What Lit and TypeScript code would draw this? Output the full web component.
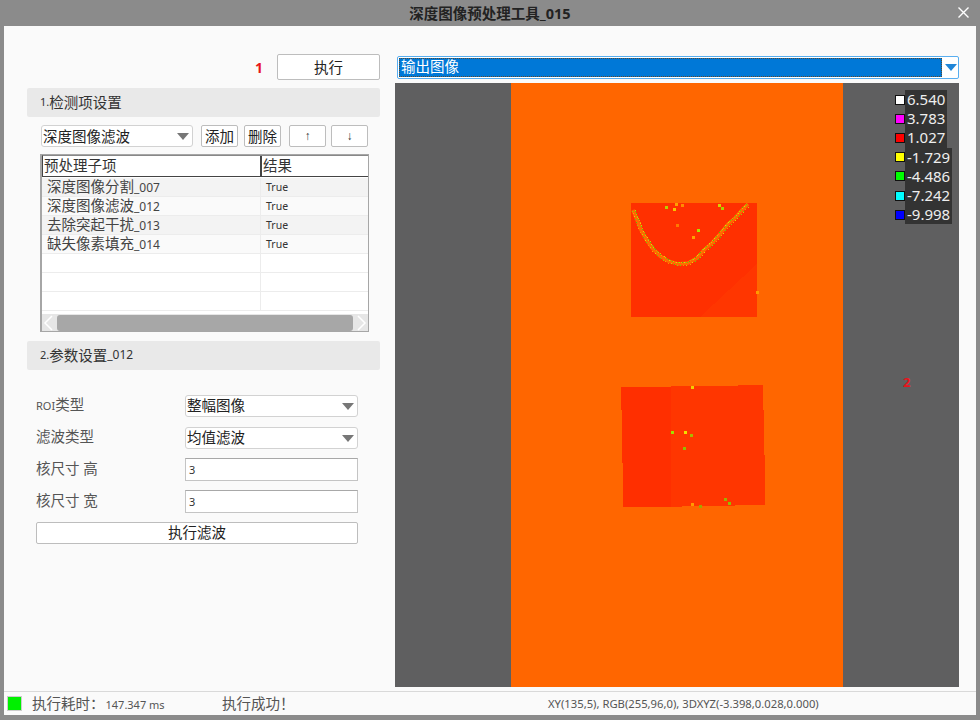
import { LitElement, html, css, svg } from "lit";
import { customElement } from "lit/decorators.js";

const rows = [
  ["深度图像分割", "_007"],
  ["深度图像滤波", "_012"],
  ["去除突起干扰", "_013"],
  ["缺失像素填充", "_014"],
];
const legend: [string, string][] = [
  ["#ffffff", "6.540"],
  ["#ff00ff", "3.783"],
  ["#ff0000", "1.027"],
  ["#ffff00", "-1.729"],
  ["#00ff00", "-4.486"],
  ["#00ffff", "-7.242"],
  ["#0000ff", "-9.998"],
];
const specks: [number, number, string][] = [
  [665, 206, "#b8d000"], [673, 208, "#f5c400"], [675, 203, "#ffa000"], [681, 204, "#ff8c00"], [718, 204, "#d8d000"], [721, 207, "#a8d000"],
  [697, 229, "#b0e000"], [692, 236, "#ffa000"], [676, 224, "#ff7a00"], [756, 291, "#ff9a00"],
  [691, 386, "#f0d000"], [671, 431, "#a0e000"], [684, 431, "#f0e000"], [690, 434, "#a8b800"], [683, 447, "#90c000"],
  [724, 498, "#a0b000"], [728, 502, "#90c000"], [691, 503, "#ff9a00"], [699, 505, "#a0a800"],
];
const curve: [number, number][] = [
  [633, 210], [637, 220], [641, 230], [646, 239], [652, 248], [660, 256], [668, 261], [678, 264], [688, 263],
  [697, 258], [705, 249], [712, 243], [720, 234], [728, 224], [735, 218], [742, 210], [748, 204],
];
const curvePath = "M" + curve.map(([x, y]) => `${x} ${y}`).join("L");
const palette = ["#9ccf00", "#ffa000", "#e8d800", "#6fd000", "#ff8a00", "#c8d400", "#58c800"];
const curveSpecks: [number, number, string][] = [];
curve.slice(1).forEach(([x, y], i) => {
  const [px, py] = curve[i];
  const len = Math.hypot(x - px, y - py);
  const nx = -(y - py) / len;
  const ny = (x - px) / len;
  const n = Math.round(len);
  for (let k = 0; k < n; k++) {
    const t = k / n;
    const side = (i + k) % 3 === 0 ? 1.6 : -1.6;
    const cx = Math.round(px + (x - px) * t + nx * side);
    const cy = Math.round(py + (y - py) * t + ny * side);
    curveSpecks.push([cx, cy, palette[(i * 3 + k * 5) % palette.length]]);
  }
});

const chevron = (d: string) => html`<svg class="chev" viewBox="0 0 14 16"><path d=${d}></path></svg>`;
const arrow = html`<svg class="arrow" viewBox="0 0 12 8"><path d="M0 0H12L6 7Z"></path></svg>`;

@customElement("app-root")
export class AppRoot extends LitElement {
  static styles = css`
    :host {
      display: flex;
      flex-direction: column;
      width: 980px;
      height: 720px;
      box-sizing: border-box;
      background: #8b8b8b;
      padding-bottom: 5px;
      overflow: hidden;
      font-family: "Noto Sans", "Noto Sans CJK SC", sans-serif;
      color: #333;
    }
    * { box-sizing: border-box; }
    .title {
      height: 26px;
      flex: none;
      display: flex;
      align-items: center;
      justify-content: center;
      font-size: 14.5px;
      font-weight: 700;
      color: #222;
      position: relative;
      padding-bottom: 2px;
    }
    .close { position: absolute; right: 11px; top: 7px; width: 11px; height: 11px; }
    .close path { stroke: #fff; stroke-width: 1.4; fill: none; }
    .win {
      flex: 1;
      margin: 0 4px;
      background: #fafafa;
      display: flex;
      flex-direction: column;
      min-height: 0;
    }
    .main { flex: 1; display: flex; min-height: 0; }
    .left { width: 391px; flex: none; padding: 28px 15px 0 23px; display: flex; flex-direction: column; }
    .top { display: flex; justify-content: flex-end; align-items: center; height: 26px; gap: 14px; }
    .one { color: #e8141c; font-weight: 700; font-size: 14px; }
    button {
      font: inherit;
      background: #fff;
      border: 1px solid #bdbdbd;
      border-radius: 2px;
      color: #222;
      padding: 0 0 2px;
      display: flex;
      align-items: center;
      justify-content: center;
    }
    .run { width: 103px; height: 26px; font-size: 14.5px; }
    .sec {
      height: 29px;
      background: #e9e9e9;
      border-radius: 2px;
      font-size: 14.5px;
      display: flex;
      align-items: center;
      padding: 0 0 2px 13px;
      color: #333;
      flex: none;
    }
    .sec .n { font-size: 11px; }
    .sec .id { font-size: 12px; }
    .sec.a { margin-top: 8px; }
    .sec.b { margin-top: 9px; }
    .tools { display: flex; margin: 8px 0 0 14px; height: 22px; }
    .tools button { width: 37px; height: 22px; font-size: 14.5px; }
    .tools .sm { font-size: 12px; font-family: "Liberation Sans", sans-serif; padding: 0; color: #333; }
    .sel {
      background: #fff;
      border: 1px solid #d2d2d2;
      border-radius: 3px;
      display: flex;
      align-items: center;
      font-size: 14.5px;
      color: #222;
      padding: 0 0 2px 1px;
      position: relative;
    }
    .sel .arrow { position: absolute; right: 3px; top: 7px; width: 12px; height: 8px; fill: #777; }
    .sel.s1 { width: 152px; height: 22px; margin-right: 8px; }
    .g6 { margin-right: 6px; }
    .g8 { margin-right: 8px; }
    .g5 { margin-right: 5px; }
    .table {
      margin: 7px 0 0 13px;
      width: 329px;
      height: 178px;
      border: 1px solid #a6a6a6;
      border-left-width: 2px;
      background: #fff;
      display: flex;
      flex-direction: column;
      flex: none;
    }
    .hd {
      display: grid;
      grid-template-columns: 217px 1fr;
      height: 22px;
      border: 1px solid #444;
      border-right: 0;
      border-top-color: #888;
      font-size: 14.5px;
      color: #333;
      flex: none;
    }
    .hd div { padding-left: 1px; line-height: 18px; }
    .hd div + div { border-left: 2px solid #444; padding-left: 1px; }
    .rows { flex: 1; padding-top: 1px; overflow: hidden; }
    .row {
      display: grid;
      grid-template-columns: 219px 1fr;
      height: 19px;
      border-bottom: 1px solid #ececec;
      font-size: 14.5px;
      line-height: 17px;
      color: #444;
    }
    .row.on { background: #fafafa; }
    .row.on:nth-child(odd) { background: #f3f3f3; }
    .row div:first-child { padding-left: 5px; border-right: 1px solid #ececec; white-space: nowrap; }
    .row div:last-child { padding-left: 5px; font-size: 10.5px; line-height: 19px; color: #333; }
    .row small { font-size: 12px; }
    .bar {
      height: 17px;
      flex: none;
      background: #e6e6e6;
      display: flex;
      align-items: center;
      margin-top: auto;
    }
    .chev { width: 14px; height: 16px; flex: none; }
    .chev path { stroke: #fff; stroke-width: 1.5; fill: none; }
    .thumb { flex: 1; height: 16px; background: #a7a7a7; border-radius: 3px; margin: 0 1px; }
    .form {
      padding: 25px 22px 0 9px;
      display: grid;
      grid-template-columns: 149px 173px;
      grid-template-rows: 22px 23px 23px 23px 22px;
      row-gap: 9px;
      align-items: center;
    }
    .lab { font-size: 14.5px; color: #555; padding-bottom: 5px; }
    .lab small { font-size: 11px; }
    .form .sel { height: 22px; width: 173px; align-self: end; padding-bottom: 3px; }
    .inp {
      height: 23px;
      background: #fff;
      border: 1px solid #c4c4c4;
      border-top-color: #a8a8a8;
      font-size: 11px;
      color: #333;
      display: flex;
      align-items: center;
      padding-left: 3px;
    }
    .form button { grid-column: 1 / 3; height: 22px; font-size: 14.5px; padding-bottom: 4px; }
    .right { flex: 1; padding: 30px 17px 0 0; display: flex; flex-direction: column; min-width: 0; }
    .output {
      height: 23px;
      margin-left: 2px;
      border: 1px solid #58aef0;
      border-radius: 2px;
      background: #fff;
      padding: 1px;
      display: flex;
      flex: none;
    }
    .output .val {
      flex: 1;
      background: #0078d7;
      outline: 1px dotted #5a4a30;
      outline-offset: -1px;
      color: #fff;
      font-size: 14.5px;
      line-height: 17px;
      padding-left: 2px;
    }
    .output .ar { width: 15px; display: flex; align-items: center; justify-content: center; padding-left: 2px; }
    .output .arrow { width: 12px; height: 8px; fill: #1f86d8; }
    .canvas { position: relative; height: 604px; margin-top: 4px; background: #5f5f60; flex: none; }
    .canvas svg { position: absolute; inset: 0; width: 100%; height: 100%; display: block; }
    .two { position: absolute; left: 508px; top: 290px; color: #e8141c; font-size: 13px; font-weight: 700; }
    .legend { position: absolute; left: 500px; top: 7px; display: flex; flex-direction: column; }
    .li { display: flex; align-items: center; height: 19.2px; }
    .sw { width: 10px; height: 10px; border: 1px solid #111; flex: none; }
    .li span {
      background: #333;
      color: #eee;
      font-size: 15px;
      line-height: 19.2px;
      padding: 0 2px;
      font-family: "Noto Sans", sans-serif;
    }
    .status {
      height: 24px;
      flex: none;
      border-top: 1px solid #d9d9d9;
      margin-top: 4px;
      display: flex;
      align-items: center;
      font-size: 14.5px;
      color: #555;
    }
    .led { width: 15px; height: 15px; background: #00f000; border: 1px solid #ccc; margin-left: 3px; flex: none; }
    .tm { margin-left: 10px; width: 190px; white-space: nowrap; padding-bottom: 2px; }
    .tm small { font-size: 11px; margin-left: 1px; }
    .ok { flex: none; width: 326px; padding-bottom: 2px; }
    .xy { font-size: 11.25px; flex: none; color: #555; }
  `;

  render() {
    return html`
      <div class="title">
        深度图像预处理工具_015
        <svg class="close" viewBox="0 0 11 11"><path d="M.5.5L10.5 10.5M10.5.5L.5 10.5"></path></svg>
      </div>
      <div class="win">
        <div class="main">
          <div class="left">
            <div class="top"><span class="one">1</span><button class="run">执行</button></div>
            <div class="sec a"><span class="n">1.</span>检测项设置</div>
            <div class="tools">
              <div class="sel s1">深度图像滤波${arrow}</div>
              <button class="g6">添加</button>
              <button class="g8">删除</button>
              <button class="sm g5">↑</button>
              <button class="sm">↓</button>
            </div>
            <div class="table">
              <div class="hd"><div>预处理子项</div><div>结果</div></div>
              <div class="rows">
                ${rows.map((r) => html`<div class="row on"><div>${r[0]}<small>${r[1]}</small></div><div>True</div></div>`)}
                ${[0, 1, 2].map(() => html`<div class="row"><div></div><div></div></div>`)}
              </div>
              <div class="bar">
                ${chevron("M10 1L3 8L10 15")}
                <div class="thumb"></div>
                ${chevron("M4 1L11 8L4 15")}
              </div>
            </div>
            <div class="sec b"><span class="n">2.</span>参数设置<span class="id">_012</span></div>
            <div class="form">
              <div class="lab"><small>ROI</small>类型</div>
              <div class="sel">整幅图像${arrow}</div>
              <div class="lab">滤波类型</div>
              <div class="sel">均值滤波${arrow}</div>
              <div class="lab">核尺寸 高</div>
              <div class="inp">3</div>
              <div class="lab">核尺寸 宽</div>
              <div class="inp">3</div>
              <button>执行滤波</button>
            </div>
          </div>
          <div class="right">
            <div class="output">
              <div class="val">输出图像</div>
              <div class="ar">${arrow}</div>
            </div>
            <div class="canvas">
              <svg viewBox="395 83 564 604" shape-rendering="crispEdges">
                <rect x="511" y="83" width="332" height="604" fill="#ff6600"></rect>
                <rect x="631" y="203" width="126" height="114" fill="#ff3000"></rect>
                <path d="M700 317L757 264V317Z" fill="#ff3600"></path>
                <path d=${curvePath} fill="none" stroke="#ff6a00" stroke-width="3.5" shape-rendering="auto"></path>
                ${curveSpecks.map(([x, y, c]) => svg`<rect x=${x} y=${y} width="1" height="1" fill=${c}></rect>`)}
                <path d="M621 387H671V386H738V385H763V410H764V455H765V505H735V506H682V507H623V463H622V410H621Z" fill="#ff3600"></path>
                <path d="M621 387H671V507H623V463H622V410H621Z" fill="#ff2f00"></path>
                ${specks.map(([x, y, c]) => svg`<rect x=${x} y=${y} width="3" height="3" fill=${c}></rect>`)}
              </svg>
              <span class="two">2</span>
              <div class="legend">
                ${legend.map(([c, v]) => html`<div class="li"><div class="sw" style="background:${c}"></div><span>${v}</span></div>`)}
              </div>
            </div>
          </div>
        </div>
        <div class="status">
          <div class="led"></div>
          <div class="tm">执行耗时：<small>147.347 ms</small></div>
          <div class="ok">执行成功！</div>
          <div class="xy">XY(135,5), RGB(255,96,0), 3DXYZ(-3.398,0.028,0.000)</div>
        </div>
      </div>
    `;
  }
}
